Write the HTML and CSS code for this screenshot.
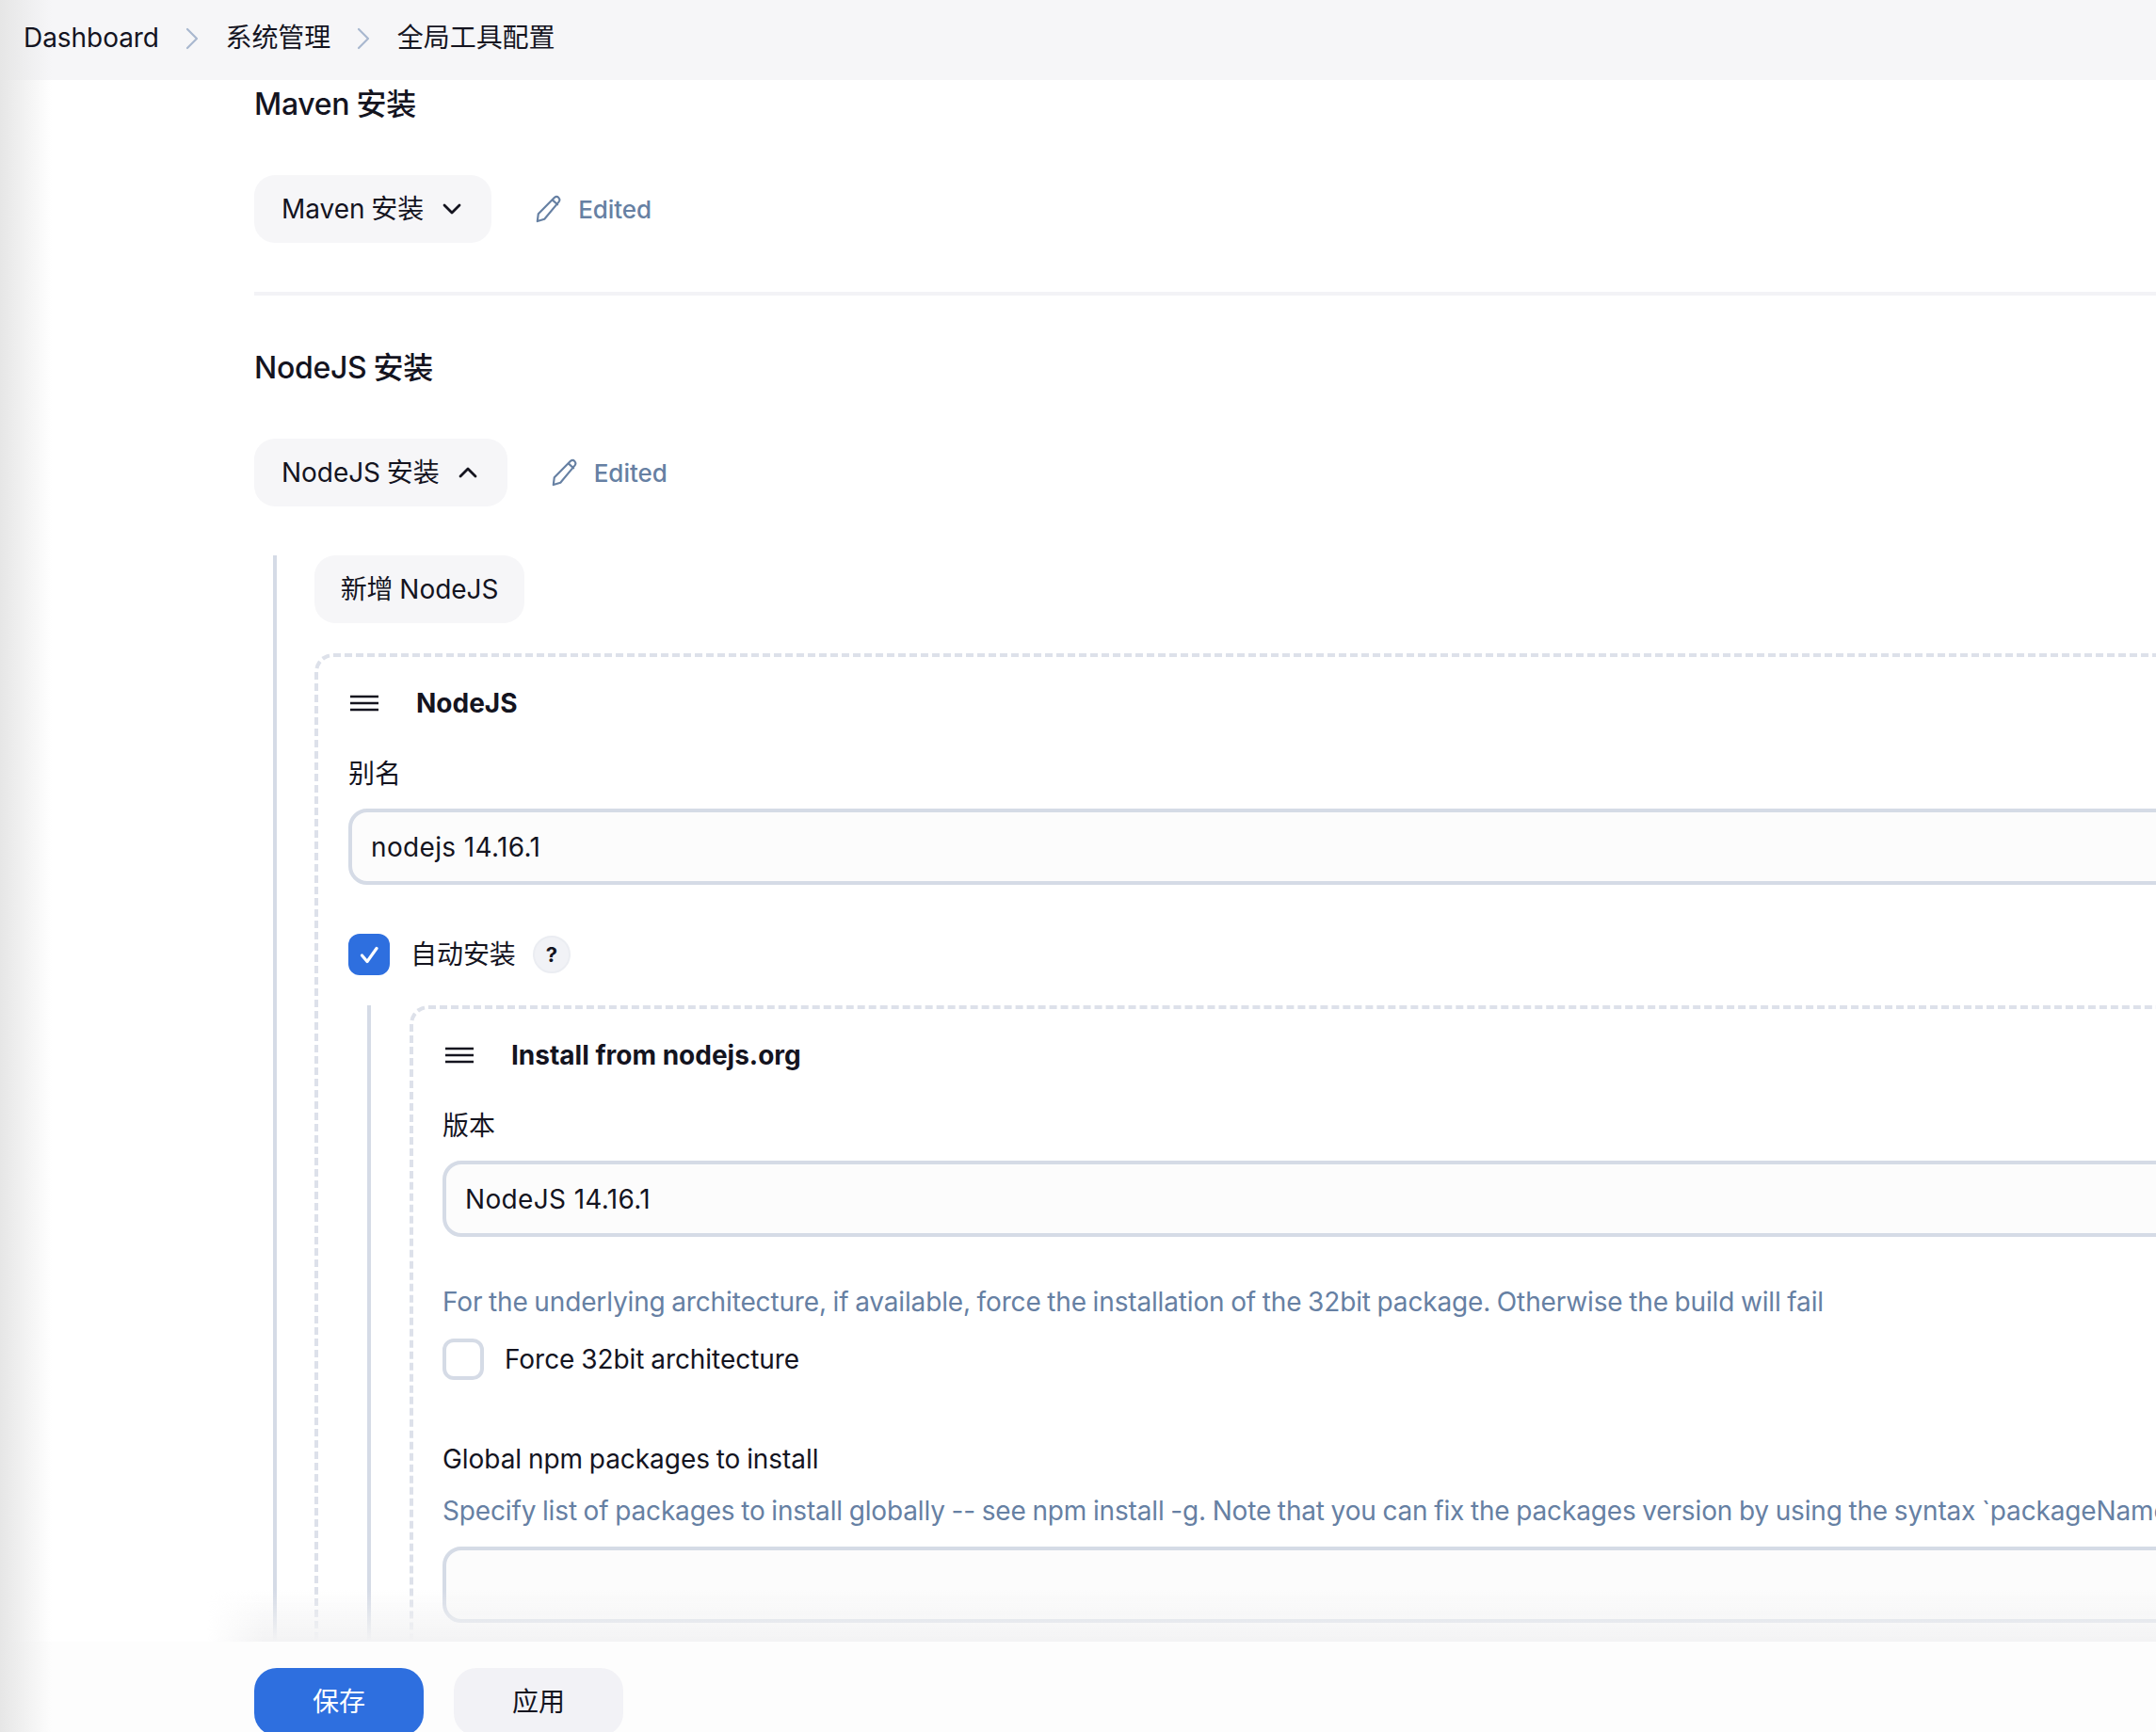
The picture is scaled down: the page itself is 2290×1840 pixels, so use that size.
FILE: index.html
```html
<!DOCTYPE html>
<html lang="zh">
<head>
<meta charset="utf-8">
<title>全局工具配置</title>
<link rel="stylesheet" href="styles.css">
</head>
<body>
<svg class="defs" width="0" height="0" aria-hidden="true">
  <symbol id="i-pencil" viewBox="0 0 28 28"><path d="M19.6 2.6c1.3-1 3-.8 4.1.3 1 1.1 1.1 2.8.2 4L9.6 24l-7 2.2.9-7.2L19.6 2.6zM17.5 5l5 4.6" fill="none" stroke="currentColor" stroke-width="2" stroke-linejoin="round" stroke-linecap="round"/></symbol>
  <symbol id="i-menu" viewBox="0 0 30 18"><path d="M0 2h30M0 9h30M0 16h30" fill="none" stroke="currentColor" stroke-width="2.6"/></symbol>
</svg>

<nav class="crumbs">
  <span class="crumb">Dashboard</span>
  <svg class="crumb-sep" viewBox="0 0 14 24"><path d="M2 2l10 10L2 22" fill="none" stroke="currentColor" stroke-width="2.2" stroke-linecap="round" stroke-linejoin="round"/></svg>
  <span class="crumb">系统管理</span>
  <svg class="crumb-sep" viewBox="0 0 14 24"><path d="M2 2l10 10L2 22" fill="none" stroke="currentColor" stroke-width="2.2" stroke-linecap="round" stroke-linejoin="round"/></svg>
  <span class="crumb">全局工具配置</span>
</nav>

<main class="page">
  <h2 class="section-title">Maven 安装</h2>
  <div class="toggle-row">
    <button class="btn btn-toggle">Maven 安装
      <svg class="chev" viewBox="0 0 20 12"><path d="M2 2l8 8 8-8" fill="none" stroke="currentColor" stroke-width="2.8" stroke-linecap="round" stroke-linejoin="round"/></svg>
    </button>
    <span class="edited"><svg class="pencil"><use href="#i-pencil"/></svg>Edited</span>
  </div>
  <hr class="divider">

  <h2 class="section-title">NodeJS 安装</h2>
  <div class="toggle-row">
    <button class="btn btn-toggle">NodeJS 安装
      <svg class="chev" viewBox="0 0 20 12"><path d="M2 10l8-8 8 8" fill="none" stroke="currentColor" stroke-width="2.8" stroke-linecap="round" stroke-linejoin="round"/></svg>
    </button>
    <span class="edited"><svg class="pencil"><use href="#i-pencil"/></svg>Edited</span>
  </div>

  <div class="tree tree-outer">
    <button class="btn btn-add">新增 NodeJS</button>
    <section class="repeat repeat-outer">
      <div class="repeat-head"><svg class="menu"><use href="#i-menu"/></svg><b class="repeat-title">NodeJS</b></div>
      <label class="field-label field-first">别名</label>
      <div class="input">nodejs 14.16.1</div>

      <div class="check-row check-auto">
        <span class="check check-on"><svg viewBox="0 0 44 44"><path d="M14.5 23l5.5 6.5 10-14" fill="none" stroke="#fff" stroke-width="3.2" stroke-linecap="round" stroke-linejoin="round"/></svg></span>
        <span class="check-text">自动安装</span>
        <span class="help">?</span>
      </div>

      <div class="tree tree-inner">
        <section class="repeat repeat-inner">
          <div class="repeat-head"><svg class="menu"><use href="#i-menu"/></svg><b class="repeat-title">Install from nodejs.org</b></div>
          <label class="field-label field-first">版本</label>
          <div class="input">NodeJS 14.16.1</div>

          <p class="desc desc-arch">For the underlying architecture, if available, force the installation of the 32bit package. Otherwise the build will fail</p>
          <div class="check-row check-force">
            <span class="check"></span>
            <span class="check-text">Force 32bit architecture</span>
          </div>

          <label class="field-label field-global">Global npm packages to install</label>
          <p class="desc desc-npm">Specify list of packages to install globally -- see npm install -g. Note that you can fix the packages version by using the syntax `packageName@version`</p>
          <div class="input input-empty"></div>
        </section>
      </div>
    </section>
  </div>
</main>

<footer class="footer">
  <button class="btn btn-foot btn-primary">保存</button>
  <button class="btn btn-foot">应用</button>
</footer>
<div class="edge-shadow"></div>
</body>
</html>
```
FILE: styles.css
```css
* { box-sizing: border-box; }
html, body { margin: 0; height: 1840px; overflow: hidden; }
body {
  position: relative;
  width: 2290px;
  background: #fff;
  color: #14141f;
  font-family: Inter, "Noto Sans CJK SC", sans-serif;
  font-size: 28px;
  line-height: 40px;
  word-spacing: -1px;
  letter-spacing: -0.05px;
}
.defs { position: absolute; }

.crumbs {
  display: flex;
  align-items: center;
  height: 85px;
  padding: 0 0 5px 25px;
  background: #f6f6f8;
}
.crumb { position: relative; z-index: 2; }
.crumb-sep { width: 14px; height: 24px; margin: 0 28.5px 0 28px; color: #a9b8cf; position: relative; top: 1px; }

.page { width: 2700px; padding-left: 270px; }
.section-title {
  margin: 0;
  padding-top: 1px;
  height: 50px;
  font-size: 32px;
  line-height: 50px;
  font-weight: 500;
  letter-spacing: -0.3px;
}
.toggle-row {
  display: flex;
  align-items: center;
  margin-top: 51px;
}
.btn {
  display: inline-flex;
  align-items: center;
  justify-content: center;
  height: 72px;
  border: 0;
  border-radius: 22px;
  background: #f6f6f8;
  color: #14141f;
  font: inherit;
  word-spacing: inherit;
  letter-spacing: inherit;
  padding: 0 29px;
}
.btn-toggle { gap: 20px; padding: 0 32px 0 29px; }
.chev { width: 20px; height: 12px; }
.edited {
  display: flex;
  align-items: center;
  margin-left: 46px;
  padding-top: 1px;
  color: #6680a3;
  font-size: 26px;
  font-weight: 500;
}
.pencil { width: 30px; height: 30px; margin-right: 16px; margin-top: -2px; }
.divider {
  height: 4px;
  margin: 52px 0 51px;
  border: 0;
  background: #f3f3f6;
}
.tree { border-left: 4px solid #d5dbe6; }
.tree-outer {
  margin: 52px 0 0 20px;
  padding: 0 0 200px 40px;
}
.btn-add { display: flex; width: 223px; padding: 0; }
.repeat {
  border: 4px dashed #dde1ea;
  border-right: 0;
  border-bottom: 0;
  border-radius: 20px 0 0 0;
  padding: 29px 0 0 32px;
  width: 2400px;
}
.repeat-outer { margin-top: 32px; }
.repeat-inner { padding-left: 31px; padding-bottom: 100px; }
.repeat-head { display: flex; align-items: center; height: 40px; }
.menu { width: 30px; height: 18px; margin-left: 2px; color: #14141f; }
.repeat-inner .menu { margin-left: 3px; }
.repeat-title { margin-left: 40px; font-weight: 700; word-spacing: 0; letter-spacing: 0; }
.field-label { display: block; }
.field-first { margin-top: 35px; margin-bottom: 17px; }
.input {
  height: 81px;
  border: 4px solid #d5dbe6;
  border-radius: 20px;
  background: #fcfcfc;
  padding: 17px 20px 15px;
  letter-spacing: 0.35px;
  word-spacing: 0;
}
.check-row { display: flex; align-items: center; }
.check-auto { margin-top: 52px; }
.check {
  width: 44px;
  height: 44px;
  flex: none;
  border: 4px solid #d5dbe6;
  border-radius: 12px;
  background: #fff;
}
.check-on { border: 0; background: #2e6fdf; }
.check-on svg { display: block; width: 44px; height: 44px; }
.check-text { margin-left: 22px; }
.help {
  display: flex;
  align-items: center;
  justify-content: center;
  width: 40px;
  height: 40px;
  margin-left: 18px;
  border: 2px solid #ebedf2;
  border-radius: 50%;
  background: #f1f2f6;
  font-size: 22px;
  font-weight: 700;
}
.tree-inner {
  margin: 32px 0 0 20px;
  padding: 0 0 0 41px;
}
.desc { margin: 0; color: #6680a3; white-space: nowrap; letter-spacing: -0.15px; }
.desc-arch { margin-top: 49px; }
.check-force { margin-top: 19px; }
.field-global { margin-top: 64px; }
.desc-npm { margin-top: 15px; margin-bottom: 18px; }
.input-empty { background: #fcfcfc; }

.footer {
  position: absolute;
  left: 0;
  right: 0;
  top: 1744px;
  height: 96px;
  display: flex;
  gap: 32px;
  padding: 28px 0 0 270px;
  background: #fdfdfd;
}
.footer::before {
  content: "";
  position: absolute;
  left: 220px;
  right: 0;
  top: -56px;
  height: 56px;
  background: linear-gradient(to bottom, rgba(243, 243, 244, 0), #f3f3f4);
  -webkit-mask-image: linear-gradient(to right, transparent, #000 60px);
  mask-image: linear-gradient(to right, transparent, #000 60px);
}
.btn-foot { flex: none; width: 180px; padding: 0; border-radius: 24px; background: #f2f2f6; }
.btn-primary { background: #2e6fdf; color: #fff; }
.edge-shadow {
  position: absolute;
  left: 0;
  top: 0;
  bottom: 0;
  width: 55px;
  background: linear-gradient(to right, #e6e6e6, rgba(255, 255, 255, 0));
  pointer-events: none;
}
```
